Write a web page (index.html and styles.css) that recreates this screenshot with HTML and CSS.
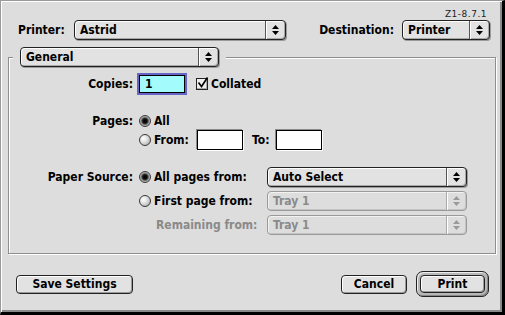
FILE: index.html
```html
<!DOCTYPE html>
<html>
<head>
<meta charset="utf-8">
<link rel="stylesheet" href="styles.css">
</head>
<body>
<div class="window">
  <div class="version">Z1-8.7.1</div>
  <div class="top-row">
    <span class="printer-lbl">Printer:</span>
    <div class="popup popup-printer"><span class="popup-text">Astrid</span><span class="popup-arrow"><svg width="7" height="10" viewBox="0 0 7 10"><path d="M3.5 0L7 4H0Z M0 6H7L3.5 10Z"/></svg></span></div>
    <span class="dest-lbl">Destination:</span>
    <div class="popup popup-dest"><span class="popup-text">Printer</span><span class="popup-arrow"><svg width="7" height="10" viewBox="0 0 7 10"><path d="M3.5 0L7 4H0Z M0 6H7L3.5 10Z"/></svg></span></div>
  </div>
  <div class="group">
    <div class="group-head">
      <span class="mask"><div class="popup popup-general"><span class="popup-text">General</span><span class="popup-arrow"><svg width="7" height="10" viewBox="0 0 7 10"><path d="M3.5 0L7 4H0Z M0 6H7L3.5 10Z"/></svg></span></div></span>
    </div>
    <div class="row row-copies">
      <span class="row-lbl">Copies:</span>
      <span class="field focused">1</span>
      <span class="check"><svg width="14" height="14" viewBox="0 0 14 14"><path d="M2.5 6.5L5.5 10.5L11.5 1.5" fill="none" stroke="#000" stroke-width="1.6"/></svg></span>
      <span class="opt collated">Collated</span>
    </div>
    <div class="row row-pages1">
      <span class="row-lbl">Pages:</span>
      <span class="radio on"></span>
      <span class="opt">All</span>
    </div>
    <div class="row row-pages2">
      <span class="row-lbl"></span>
      <span class="radio"></span>
      <span class="opt from">From:</span>
      <span class="field plain"></span>
      <span class="opt to">To:</span>
      <span class="field plain"></span>
    </div>
    <div class="row row-ps1">
      <span class="row-lbl">Paper Source:</span>
      <span class="src-opt"><span class="radio on"></span><span class="opt">All pages from:</span></span>
      <div class="popup popup-src"><span class="popup-text">Auto Select</span><span class="popup-arrow"><svg width="7" height="10" viewBox="0 0 7 10"><path d="M3.5 0L7 4H0Z M0 6H7L3.5 10Z"/></svg></span></div>
    </div>
    <div class="row row-ps2">
      <span class="row-lbl"></span>
      <span class="src-opt"><span class="radio"></span><span class="opt">First page from:</span></span>
      <div class="popup popup-src disabled"><span class="popup-text">Tray 1</span><span class="popup-arrow"><svg width="7" height="10" viewBox="0 0 7 10"><path d="M3.5 0L7 4H0Z M0 6H7L3.5 10Z"/></svg></span></div>
    </div>
    <div class="row row-ps3">
      <span class="row-lbl"></span>
      <span class="src-opt"><span class="opt dim">Remaining from:</span></span>
      <div class="popup popup-src disabled"><span class="popup-text">Tray 1</span><span class="popup-arrow"><svg width="7" height="10" viewBox="0 0 7 10"><path d="M3.5 0L7 4H0Z M0 6H7L3.5 10Z"/></svg></span></div>
    </div>
  </div>
  <div class="buttons">
    <span class="btn btn-save">Save Settings</span>
    <span class="btn btn-cancel">Cancel</span>
    <span class="ring"><span class="btn btn-print">Print</span></span>
  </div>
</div>
</body>
</html>
```

FILE: styles.css
```css
html, body {
  margin: 0;
  padding: 0;
  background: #dddddd;
}
.window {
  box-sizing: border-box;
  width: 505px;
  height: 315px;
  background: #dddddd;
  border-left: 1px solid #9a9a9a;
  border-top: 1px solid #9a9a9a;
  border-right: 3px solid #000;
  border-bottom: 3px solid #000;
  box-shadow: inset 1px 1px 0 #fff, inset -2px -2px 0 #8a8a8a;
  font-family: "DejaVu Sans Condensed", "DejaVu Sans", sans-serif;
  font-stretch: condensed;
  font-weight: bold;
  font-size: 12px;
  line-height: 15px;
  color: #000;
}
.version {
  margin-top: 7px;
  height: 12px;
  line-height: 12px;
  text-align: right;
  padding-right: 15px;
  font-family: "DejaVu Sans", sans-serif;
  font-stretch: normal;
  font-weight: normal;
  font-size: 9px;
  letter-spacing: 0.5px;
  color: #222;
}
.top-row {
  display: flex;
  align-items: center;
  height: 20px;
  padding-left: 17px;
  padding-right: 12px;
}
.printer-lbl {
  width: 56px;
}
.dest-lbl {
  margin-left: auto;
  margin-right: 8px;
}
.popup {
  box-sizing: border-box;
  display: flex;
  align-items: stretch;
  height: 20px;
  border: 1px solid #222;
  border-radius: 4px;
  background: #e2e2e2;
  box-shadow: inset 1px 1px 0 #fff, inset -1px -1px 0 #a8a8a8, 1px 1px 0 #9a9a9a;
}
.popup-text {
  flex: 1;
  padding-left: 5px;
  display: flex;
  align-items: center;
  white-space: nowrap;
}
.popup-arrow {
  box-sizing: border-box;
  width: 20px;
  border-left: 1px solid #555;
  box-shadow: inset 1px 0 0 #fff;
  display: flex;
  align-items: center;
  justify-content: center;
}
.popup-arrow svg {
  fill: #000;
}
.popup-printer { width: 212px; }
.popup-dest { width: 88px; }
.popup-general { width: 199px; }
.popup-src { width: 200px; }
.popup.disabled {
  border-color: #9a9a9a;
  color: #8a8a8a;
  background: #dddddd;
  box-shadow: inset 1px 1px 0 #f2f2f2, inset -1px -1px 0 #c4c4c4;
}
.popup.disabled .popup-arrow {
  border-left-color: #aaa;
}
.popup.disabled .popup-arrow svg {
  fill: #9a9a9a;
}
.group {
  box-sizing: border-box;
  width: 488px;
  margin-left: 7px;
  margin-top: 17px;
  border: 1px solid #8e8e8e;
  box-shadow: inset 1px 1px 0 #fff, 1px 1px 0 #fff;
  padding-bottom: 18px;
}
.group-head {
  margin-top: -11px;
  height: 20px;
  padding-left: 4px;
  display: flex;
}
.mask {
  background: #dddddd;
  padding: 0 7px;
  display: flex;
}
.row {
  display: flex;
  align-items: center;
}
.row-lbl {
  width: 124px;
  margin-right: 4px;
  text-align: right;
  flex: none;
}
.row-copies { margin-top: 6px; height: 22px; }
.row-pages1 { margin-top: 18px; height: 16px; }
.row-pages2 { height: 22px; }
.row-ps1 { margin-top: 16px; height: 20px; }
.row-ps2 { margin-top: 4px; height: 20px; }
.row-ps3 { margin-top: 4px; height: 20px; }
.field {
  box-sizing: border-box;
  display: flex;
  align-items: center;
  background: #fff;
  border: 1px solid #000;
  flex: none;
}
.field.focused {
  width: 46px;
  height: 18px;
  margin-left: 2px;
  background: #a4fbfb;
  outline: 2px solid #6565c8;
  padding-left: 5px;
  font-weight: bold;
}
.field.plain {
  width: 46px;
  height: 20px;
  box-shadow: -1px -1px 0 #8a8a8a, 1px 1px 0 #fff;
}
.check {
  box-sizing: border-box;
  width: 12px;
  height: 12px;
  margin-left: 11px;
  border: 1px solid #222;
  background: #eeeeee;
  box-shadow: inset -1px -1px 0 #aaa;
  position: relative;
  flex: none;
}
.check svg {
  position: absolute;
  left: -1px;
  top: -3px;
}
.collated { margin-left: 5px; }
.radio {
  box-sizing: border-box;
  width: 12px;
  height: 12px;
  margin-left: 2px;
  border-radius: 50%;
  border: 1px solid #3a3a3a;
  background: radial-gradient(circle at 35% 35%, #ffffff 0, #e6e6e6 35%, #b4b4b4 80%, #8a8a8a 100%);
  flex: none;
}
.radio.on {
  background: radial-gradient(circle at 50% 50%, #000 0, #111 2.2px, #555 3.2px, #9a9a9a 4.2px, #bdbdbd 5px);
}
.opt {
  margin-left: 3px;
  white-space: nowrap;
}
.opt.from {
  width: 43px;
}
.opt.to {
  margin-left: 9px;
  width: 24px;
}
.src-opt {
  width: 130px;
  display: flex;
  align-items: center;
  flex: none;
}
.opt.dim {
  margin-left: 19px;
  color: #8a8a8a;
}
.buttons {
  display: flex;
  align-items: center;
  margin-top: 17px;
  height: 26px;
  padding-left: 15px;
  padding-right: 13px;
}
.btn {
  box-sizing: border-box;
  display: flex;
  align-items: center;
  justify-content: center;
  height: 19px;
  border: 1px solid #222;
  border-radius: 4px;
  background: #e2e2e2;
  box-shadow: inset 1px 1px 0 #fff, inset -1px -1px 0 #9a9a9a;
}
.btn-save { width: 117px; }
.btn-cancel { width: 66px; margin-left: auto; }
.ring {
  box-sizing: border-box;
  margin-left: 9px;
  width: 73px;
  height: 26px;
  padding: 3px;
  border: 1px solid #222;
  border-radius: 7px;
  background: #b8b8b8;
  box-shadow: inset 1px 1px 0 #eee, inset -1px -1px 0 #888;
  display: flex;
}
.btn-print {
  width: 65px;
  height: 18px;
}
```
